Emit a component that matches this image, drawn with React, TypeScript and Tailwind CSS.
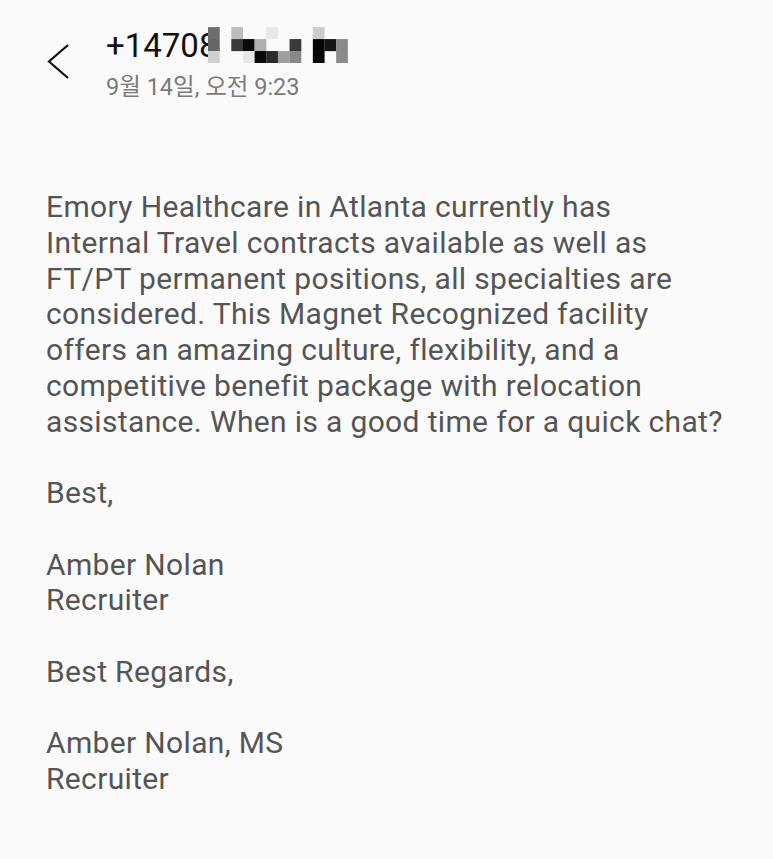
import React from "react";

const cells: [number, number, string][] = [
  [0, 0, "#6e6e6e"], [0, 1, "#666666"], [0, 2, "#d0d0d0"],
  [2, 0, "#bcbcbc"], [2, 1, "#3a3a3a"],
  [3, 1, "#0a0a0a"], [3, 2, "#e8e8e8"],
  [4, 1, "#b0b0b0"], [4, 2, "#0a0a0a"],
  [5, 0, "#e8e8e8"], [5, 2, "#2a2a2a"],
  [6, 2, "#a0a0a0"],
  [7, 1, "#3a3a3a"], [7, 2, "#888888"],
  [9, 0, "#cccccc"], [9, 1, "#050505"], [9, 2, "#050505"],
  [10, 1, "#151515"],
  [11, 1, "#8a8a8a"], [11, 2, "#8a8a8a"],
];

const body = `Emory Healthcare in Atlanta currently has
Internal Travel contracts available as well as
FT/PT permanent positions, all specialties are
considered. This Magnet Recognized facility
offers an amazing culture, flexibility, and a
competitive benefit package with relocation
assistance. When is a good time for a quick chat?

Best,

Amber Nolan
Recruiter

Best Regards,

Amber Nolan, MS
Recruiter`;

export default function App() {
  return (
    <div
      className="min-h-[859px] w-[773px] bg-[#fafafa]"
      style={{ fontFamily: "Roboto, 'Noto Sans CJK KR', sans-serif" }}
    >
      <div className="flex items-start pt-[28px]">
        <div className="w-[106px] pl-[46px] pt-[16px]">
          <svg width="26" height="36" viewBox="0 0 26 36">
            <polyline points="22,1 3,17.5 22,34" fill="none" stroke="#111" strokeWidth="2.2" />
          </svg>
        </div>
        <div className="flex flex-col">
          <div className="relative text-[33px] leading-[36px] text-[#111]">
            +14708
            <svg className="absolute left-[102px] top-[-1px]" width="140" height="36" viewBox="0 0 137 35">
              {cells.map(([c, r, col], i) => (
                <rect key={i} x={c * 11.4} y={r * 11.7} width="11.5" height="11.8" fill={col} />
              ))}
            </svg>
          </div>
          <div className="mt-[8px] text-[23.5px] leading-[30px] text-[#7a7a7a]">9월 14일, 오전 9:23</div>
        </div>
      </div>
      <div className="whitespace-pre-line pl-[46px] pt-[87px] text-[30px] leading-[35.75px] tracking-[0.35px] text-[#555555]">
        {body}
      </div>
    </div>
  );
}
